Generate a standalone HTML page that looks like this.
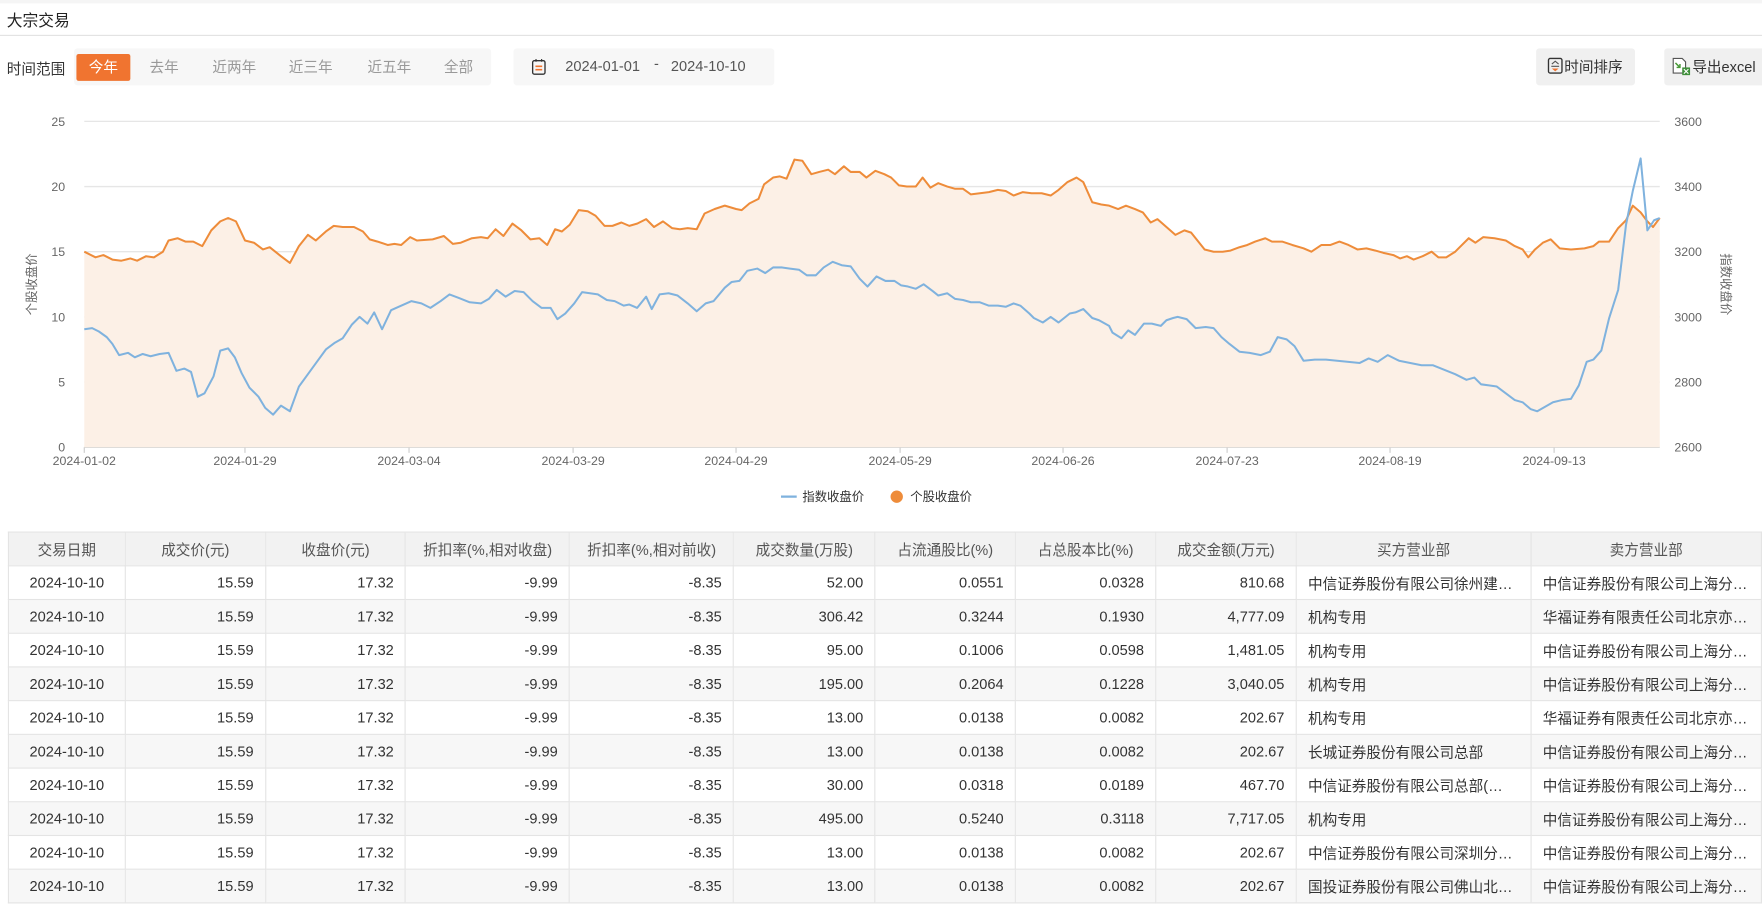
<!DOCTYPE html>
<html><head><meta charset="utf-8"><style>
html,body{margin:0;padding:0;background:#fff;overflow:hidden}
body{width:1762px;height:906px}
#w{position:absolute;left:0;top:0;width:1568px;height:806px;transform:scale(1.12372);transform-origin:0 0;font-family:"Liberation Sans","Noto Sans CJK SC",sans-serif;color:#333}
.a{position:absolute;white-space:nowrap}
.seg{position:absolute;top:48px;height:24px;line-height:24px;font-size:13px;color:#999}
table{position:absolute;left:7px;top:473px;border-collapse:collapse;font-size:13px;color:#333;table-layout:fixed}
td,th{height:29px;padding:0 10px;border:1px solid #e4e4e4;white-space:nowrap;overflow:hidden;text-overflow:ellipsis}
th{background:#f2f2f2;font-weight:normal;text-align:center;color:#555}
td.r{text-align:right}td.c{text-align:center}
tr:nth-child(odd) td{background:#f7f7f7}
</style></head><body><div id="w">
<div class="a" style="left:0;top:0;width:1568px;height:3px;background:#f5f5f5"></div>
<div class="a" style="left:6px;top:8px;font-size:14px;color:#222">大宗交易</div>
<div class="a" style="left:0;top:31px;width:1568px;height:1px;background:#e2e2e2"></div>
<div class="a" style="left:6px;top:51px;font-size:13px">时间范围</div>
<div class="a" style="left:66px;top:43px;width:371px;height:33px;background:#f7f7f7;border-radius:3px"></div>
<div class="seg" style="left:68px;width:48px;background:#f07430;color:#fff;text-align:center;border-radius:2px">今年</div>
<div class="seg" style="left:133px">去年</div>
<div class="seg" style="left:189px">近两年</div>
<div class="seg" style="left:257px">近三年</div>
<div class="seg" style="left:327px">近五年</div>
<div class="seg" style="left:395px">全部</div>
<div class="a" style="left:457px;top:43px;width:232px;height:33px;background:#f7f7f7;border-radius:3px"></div>
<svg class="a" style="left:473px;top:52px" width="13" height="15" viewBox="0 0 13 15"><rect x="1" y="2" width="11" height="12" rx="1.5" fill="none" stroke="#333" stroke-width="1.2"/><line x1="4" y1="0.5" x2="4" y2="3" stroke="#333"/><line x1="9" y1="0.5" x2="9" y2="3" stroke="#333"/><line x1="3.5" y1="7" x2="9.5" y2="7" stroke="#f07430" stroke-width="1.5"/><line x1="3.5" y1="10" x2="9.5" y2="10" stroke="#f07430" stroke-width="1.5"/></svg>
<div class="a" style="left:503px;top:51px;font-size:13px;color:#555">2024-01-01</div>
<div class="a" style="left:582px;top:49px;font-size:13px;color:#555">-</div>
<div class="a" style="left:597px;top:51px;font-size:13px;color:#555">2024-10-10</div>
<div class="a" style="left:1367px;top:43px;width:88px;height:33px;background:#f0f0f0;border-radius:3px"></div>
<svg class="a" style="left:1377px;top:51px" width="14" height="15" viewBox="0 0 14 15"><rect x="1" y="1" width="12" height="13" rx="1.5" fill="none" stroke="#333" stroke-width="1.2"/><path d="M4 6 L7 3.5 L10 6" fill="none" stroke="#555"/><line x1="3.5" y1="8" x2="10.5" y2="8" stroke="#555"/><path d="M4 10 L7 12.5 L10 10Z" fill="#f07430"/></svg>
<div class="a" style="left:1392px;top:49px;font-size:13px">时间排序</div>
<div class="a" style="left:1481px;top:43px;width:90px;height:33px;background:#f0f0f0;border-radius:3px"></div>
<svg class="a" style="left:1488px;top:51px" width="17" height="16" viewBox="0 0 17 16"><path d="M1 1 H9 L12 4 V14 H1Z" fill="#fff" stroke="#555"/><path d="M3 5 L7 9 M7 6 V9 H4" stroke="#4a9a3a" fill="none" stroke-width="1.3"/><rect x="9" y="9" width="7" height="7" fill="#3f8f3a"/><path d="M10.5 10.5 L14.5 14.5 M14.5 10.5 L10.5 14.5" stroke="#fff"/></svg>
<div class="a" style="left:1506px;top:49px;font-size:13px">导出excel</div>

<svg class="a" style="left:0;top:95px" width="1568" height="360" viewBox="0 95 1568 360" font-family="Liberation Sans, Noto Sans CJK SC, sans-serif">
<g stroke="#e6e6e6" stroke-width="1.2">
<line x1="75" y1="108" x2="1477" y2="108"/><line x1="75" y1="166" x2="1477" y2="166"/><line x1="75" y1="224" x2="1477" y2="224"/><line x1="75" y1="282" x2="1477" y2="282"/><line x1="75" y1="340" x2="1477" y2="340"/><line x1="75" y1="398" x2="1477" y2="398" stroke="#ccc"/>
</g>
<g font-size="11" fill="#666" text-anchor="end">
<text x="58" y="112">25</text><text x="58" y="170">20</text><text x="58" y="228">15</text><text x="58" y="286">10</text><text x="58" y="344">5</text><text x="58" y="402">0</text>
</g>
<g font-size="11" fill="#666">
<text x="1490" y="112">3600</text><text x="1490" y="170">3400</text><text x="1490" y="228">3200</text><text x="1490" y="286">3000</text><text x="1490" y="344">2800</text><text x="1490" y="402">2600</text>
</g>
<text transform="translate(32,253) rotate(-90)" font-size="11" fill="#666" text-anchor="middle">个股收盘价</text>
<text transform="translate(1532,253) rotate(90)" font-size="11" fill="#666" text-anchor="middle">指数收盘价</text>
<g font-size="11" fill="#666" text-anchor="middle">
<text x="75" y="414">2024-01-02</text><text x="218" y="414">2024-01-29</text><text x="364" y="414">2024-03-04</text><text x="510" y="414">2024-03-29</text><text x="655" y="414">2024-04-29</text><text x="801" y="414">2024-05-29</text><text x="946" y="414">2024-06-26</text><text x="1092" y="414">2024-07-23</text><text x="1237" y="414">2024-08-19</text><text x="1383" y="414">2024-09-13</text>
</g>
<g stroke="#ccc"><line x1="75" y1="398" x2="75" y2="403"/><line x1="218" y1="398" x2="218" y2="403"/><line x1="364" y1="398" x2="364" y2="403"/><line x1="510" y1="398" x2="510" y2="403"/><line x1="655" y1="398" x2="655" y2="403"/><line x1="801" y1="398" x2="801" y2="403"/><line x1="946" y1="398" x2="946" y2="403"/><line x1="1092" y1="398" x2="1092" y2="403"/><line x1="1237" y1="398" x2="1237" y2="403"/><line x1="1383" y1="398" x2="1383" y2="403"/></g>
<polygon fill="#fcf0e6" points="75,398 75,224 85,229 92,227 100,231 108,232 116,230 122,232 130,228 137,229 145,224 150,214 158,212 165,215 172,215 180,219 188,205 196,197 203,194 210,197 218,214 226,216 234,222 240,220 250,228 258,234 266,219 274,209 281,214 290,206 297,201 305,202 315,202 323,206 329,213 336,215 345,218 351,217 357,218 365,211 371,214 385,213 395,210 403,217 410,216 420,212 428,211 434,212 441,204 448,210 456,199 464,205 472,213 480,212 487,218 494,204 500,206 507,200 515,187 523,188 530,192 538,201 545,201 553,198 560,201 567,199 575,195 582,202 590,197 598,203 605,204 612,203 620,204 627,190 636,186 645,183 655,186 660,187 667,181 675,177 680,164 688,158 694,157 700,159 707,142 714,143 722,155 729,153 737,151 743,155 751,148 757,153 765,153 771,158 779,152 787,155 793,158 800,165 807,166 815,166 821,158 828,167 835,163 843,166 850,168 857,168 864,173 872,172 880,171 888,169 895,170 902,174 910,171 918,172 927,172 935,174 942,169 950,162 958,158 964,162 972,180 980,182 987,183 995,186 1002,183 1010,186 1017,189 1024,198 1030,195 1038,202 1046,209 1054,205 1060,207 1072,222 1080,224 1088,224 1095,223 1103,220 1110,218 1117,215 1126,212 1132,215 1141,215 1150,218 1160,221 1167,224 1176,218 1184,218 1192,215 1200,218 1208,222 1216,221 1224,223 1231,225 1240,227 1246,230 1252,228 1258,231 1266,228 1274,224 1280,229 1287,229 1295,224 1300,219 1307,212 1313,216 1320,211 1330,212 1340,214 1348,219 1355,222 1360,229 1366,222 1373,216 1380,213 1388,221 1398,222 1410,221 1418,219 1423,215 1432,215 1440,203 1447,196 1453,183 1460,189 1466,197 1471,202 1477,194 1477,398"/>
<polyline fill="none" stroke="#ee8c3a" stroke-width="1.8" stroke-linejoin="round" points="75,224 85,229 92,227 100,231 108,232 116,230 122,232 130,228 137,229 145,224 150,214 158,212 165,215 172,215 180,219 188,205 196,197 203,194 210,197 218,214 226,216 234,222 240,220 250,228 258,234 266,219 274,209 281,214 290,206 297,201 305,202 315,202 323,206 329,213 336,215 345,218 351,217 357,218 365,211 371,214 385,213 395,210 403,217 410,216 420,212 428,211 434,212 441,204 448,210 456,199 464,205 472,213 480,212 487,218 494,204 500,206 507,200 515,187 523,188 530,192 538,201 545,201 553,198 560,201 567,199 575,195 582,202 590,197 598,203 605,204 612,203 620,204 627,190 636,186 645,183 655,186 660,187 667,181 675,177 680,164 688,158 694,157 700,159 707,142 714,143 722,155 729,153 737,151 743,155 751,148 757,153 765,153 771,158 779,152 787,155 793,158 800,165 807,166 815,166 821,158 828,167 835,163 843,166 850,168 857,168 864,173 872,172 880,171 888,169 895,170 902,174 910,171 918,172 927,172 935,174 942,169 950,162 958,158 964,162 972,180 980,182 987,183 995,186 1002,183 1010,186 1017,189 1024,198 1030,195 1038,202 1046,209 1054,205 1060,207 1072,222 1080,224 1088,224 1095,223 1103,220 1110,218 1117,215 1126,212 1132,215 1141,215 1150,218 1160,221 1167,224 1176,218 1184,218 1192,215 1200,218 1208,222 1216,221 1224,223 1231,225 1240,227 1246,230 1252,228 1258,231 1266,228 1274,224 1280,229 1287,229 1295,224 1300,219 1307,212 1313,216 1320,211 1330,212 1340,214 1348,219 1355,222 1360,229 1366,222 1373,216 1380,213 1388,221 1398,222 1410,221 1418,219 1423,215 1432,215 1440,203 1447,196 1453,183 1460,189 1466,197 1471,202 1477,194"/>
<polyline fill="none" stroke="#7fb2de" stroke-width="1.8" stroke-linejoin="round" points="75,293 82,292 88,295 95,300 100,306 106,316 114,314 120,318 127,315 134,317 142,315 150,314 157,330 164,328 170,331 176,353 182,350 190,335 196,312 203,310 209,318 215,332 222,345 230,353 236,363 243,369 250,361 258,366 266,344 274,333 282,322 290,311 298,305 305,301 313,289 320,282 327,288 333,278 340,293 348,276 357,272 366,268 375,270 383,274 392,268 400,262 408,265 418,269 428,270 435,266 442,258 450,264 458,259 466,260 474,268 482,274 490,274 496,284 503,279 511,270 518,260 525,261 532,262 540,267 547,268 555,272 560,271 567,274 575,264 580,275 587,262 595,261 603,263 612,270 620,277 628,270 635,268 645,256 651,251 658,250 665,241 674,239 681,243 688,238 696,238 703,239 711,240 718,245 726,245 733,238 741,233 749,236 757,237 765,248 772,255 780,246 788,250 796,250 802,254 808,255 815,257 822,253 830,259 835,263 843,261 850,266 857,267 864,269 872,269 880,272 888,272 895,273 902,270 908,272 916,279 920,283 928,287 935,282 942,287 952,279 957,278 964,275 972,283 978,285 987,290 990,296 998,301 1004,294 1010,298 1018,288 1025,288 1033,290 1038,285 1044,283 1048,282 1056,284 1064,292 1073,291 1080,292 1087,300 1094,306 1103,313 1112,314 1122,316 1130,313 1137,300 1145,302 1152,308 1160,321 1170,320 1180,320 1190,321 1200,322 1210,323 1218,319 1226,322 1235,316 1245,321 1255,323 1265,325 1275,325 1285,329 1295,333 1305,338 1312,336 1318,342 1325,343 1332,344 1340,350 1348,356 1355,358 1362,364 1368,366 1375,362 1382,358 1390,356 1398,355 1405,343 1412,322 1418,320 1425,312 1432,283 1440,258 1447,200 1453,170 1460,141 1466,205 1472,196 1477,194"/>
<line x1="695" y1="442" x2="709" y2="442" stroke="#7fb2de" stroke-width="2"/>
<text x="714" y="446" font-size="11" fill="#333">指数收盘价</text>
<circle cx="798" cy="442" r="5.5" fill="#ee8c3a"/>
<text x="810" y="446" font-size="11" fill="#333">个股收盘价</text>
</svg>

<table>
<colgroup><col style="width:104px"><col style="width:125px"><col style="width:125px"><col style="width:146px"><col style="width:146px"><col style="width:126px"><col style="width:125px"><col style="width:125px"><col style="width:125px"><col style="width:209px"><col style="width:205px"></colgroup>
<tr><th>交易日期</th><th>成交价(元)</th><th>收盘价(元)</th><th>折扣率(%,相对收盘)</th><th>折扣率(%,相对前收)</th><th>成交数量(万股)</th><th>占流通股比(%)</th><th>占总股本比(%)</th><th>成交金额(万元)</th><th>买方营业部</th><th>卖方营业部</th></tr>
<tr><td class="c">2024-10-10</td><td class="r">15.59</td><td class="r">17.32</td><td class="r">-9.99</td><td class="r">-8.35</td><td class="r">52.00</td><td class="r">0.0551</td><td class="r">0.0328</td><td class="r">810.68</td><td>中信证券股份有限公司徐州建…</td><td>中信证券股份有限公司上海分…</td></tr>
<tr><td class="c">2024-10-10</td><td class="r">15.59</td><td class="r">17.32</td><td class="r">-9.99</td><td class="r">-8.35</td><td class="r">306.42</td><td class="r">0.3244</td><td class="r">0.1930</td><td class="r">4,777.09</td><td>机构专用</td><td>华福证券有限责任公司北京亦…</td></tr>
<tr><td class="c">2024-10-10</td><td class="r">15.59</td><td class="r">17.32</td><td class="r">-9.99</td><td class="r">-8.35</td><td class="r">95.00</td><td class="r">0.1006</td><td class="r">0.0598</td><td class="r">1,481.05</td><td>机构专用</td><td>中信证券股份有限公司上海分…</td></tr>
<tr><td class="c">2024-10-10</td><td class="r">15.59</td><td class="r">17.32</td><td class="r">-9.99</td><td class="r">-8.35</td><td class="r">195.00</td><td class="r">0.2064</td><td class="r">0.1228</td><td class="r">3,040.05</td><td>机构专用</td><td>中信证券股份有限公司上海分…</td></tr>
<tr><td class="c">2024-10-10</td><td class="r">15.59</td><td class="r">17.32</td><td class="r">-9.99</td><td class="r">-8.35</td><td class="r">13.00</td><td class="r">0.0138</td><td class="r">0.0082</td><td class="r">202.67</td><td>机构专用</td><td>华福证券有限责任公司北京亦…</td></tr>
<tr><td class="c">2024-10-10</td><td class="r">15.59</td><td class="r">17.32</td><td class="r">-9.99</td><td class="r">-8.35</td><td class="r">13.00</td><td class="r">0.0138</td><td class="r">0.0082</td><td class="r">202.67</td><td>长城证券股份有限公司总部</td><td>中信证券股份有限公司上海分…</td></tr>
<tr><td class="c">2024-10-10</td><td class="r">15.59</td><td class="r">17.32</td><td class="r">-9.99</td><td class="r">-8.35</td><td class="r">30.00</td><td class="r">0.0318</td><td class="r">0.0189</td><td class="r">467.70</td><td>中信证券股份有限公司总部(…</td><td>中信证券股份有限公司上海分…</td></tr>
<tr><td class="c">2024-10-10</td><td class="r">15.59</td><td class="r">17.32</td><td class="r">-9.99</td><td class="r">-8.35</td><td class="r">495.00</td><td class="r">0.5240</td><td class="r">0.3118</td><td class="r">7,717.05</td><td>机构专用</td><td>中信证券股份有限公司上海分…</td></tr>
<tr><td class="c">2024-10-10</td><td class="r">15.59</td><td class="r">17.32</td><td class="r">-9.99</td><td class="r">-8.35</td><td class="r">13.00</td><td class="r">0.0138</td><td class="r">0.0082</td><td class="r">202.67</td><td>中信证券股份有限公司深圳分…</td><td>中信证券股份有限公司上海分…</td></tr>
<tr><td class="c">2024-10-10</td><td class="r">15.59</td><td class="r">17.32</td><td class="r">-9.99</td><td class="r">-8.35</td><td class="r">13.00</td><td class="r">0.0138</td><td class="r">0.0082</td><td class="r">202.67</td><td>国投证券股份有限公司佛山北…</td><td>中信证券股份有限公司上海分…</td></tr>
</table>
</div></body></html>
